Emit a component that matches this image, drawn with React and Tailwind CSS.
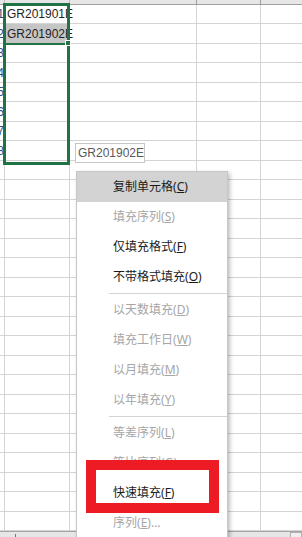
import React from 'react'

const rows = Array.from({ length: 27 }, (_, i) => i + 1)

const cellText = {
  1: 'GR201901E',
  2: 'GR201902E',
}

const menuItems = [
  { label: '复制单元格', key: 'C', enabled: true, active: true },
  { label: '填充序列', key: 'S' },
  { label: '仅填充格式', key: 'F', enabled: true },
  { label: '不带格式填充', key: 'O', enabled: true },
  { sep: true },
  { label: '以天数填充', key: 'D' },
  { label: '填充工作日', key: 'W' },
  { label: '以月填充', key: 'M' },
  { label: '以年填充', key: 'Y' },
  { sep: true },
  { label: '等差序列', key: 'L' },
  { label: '等比序列', key: 'G' },
  { label: '快速填充', key: 'F', enabled: true },
  { label: '序列', key: 'E', tail: '...' },
]

const Row = ({ n }) => (
  <div className="flex h-[20px] border-b border-[#d4d4d4]">
    <div className="w-[5px] shrink-0 border-r border-[#d4d4d4] overflow-hidden flex justify-end items-center text-[12px] text-[#2f4f7f]">
      {n <= 8 && <span className="whitespace-nowrap">{n}</span>}
    </div>
    <div
      className={`w-[65px] shrink-0 border-r border-[#d4d4d4] flex items-center pl-[2px] text-[12px] text-[#1f1f1f] whitespace-nowrap relative z-10 ${
        n === 2 ? 'bg-[#c6c6c6]' : ''
      }`}
    >
      <span>{cellText[n]}</span>
    </div>
    <div className="w-[127px] shrink-0 border-r border-[#d4d4d4]" />
    <div className="w-[64px] shrink-0 border-r border-[#d4d4d4]" />
    <div className="flex-1" />
  </div>
)

const App = () => {
  return (
    <div className="relative w-[302px] h-[537px] overflow-hidden bg-white font-['Liberation_Sans',sans-serif]">
      {/* sheet grid */}
      <div className="h-[531px] overflow-hidden flex flex-col">
        <div className="flex h-[5px] shrink-0 bg-[#e6e6e6] border-b border-[#9f9f9f]">
          <div className="w-[5px] shrink-0 border-r border-[#bcbcbc]" />
          <div className="w-[65px] shrink-0 border-r border-[#bcbcbc]" />
          <div className="w-[127px] shrink-0 border-r border-[#9f9f9f]" />
          <div className="w-[64px] shrink-0 border-r border-[#9f9f9f]" />
          <div className="flex-1" />
        </div>
        {rows.map((n) => (
          <Row key={n} n={n} />
        ))}
      </div>

      {/* sheet tab bar */}
      <div className="relative h-[6px] bg-[#e6e6e6] border-t border-[#a6a6a6]">
        <div className="absolute left-[15px] top-[2px] w-px h-[4px] bg-[#777]" />
        <div className="absolute left-[290px] top-0 w-[12px] h-[6px] border border-[#b0b0b0] bg-[#f0f0f0]" />
      </div>

      {/* selection */}
      <div className="absolute left-[3px] top-[3px] w-[67px] h-[162px] border-[3px] border-[#217346] z-20 pointer-events-none" />
      <div className="absolute left-[6px] top-[43px] w-[61px] h-[2px] bg-[#217346] z-20" />
      <div className="absolute left-[65px] top-[40px] w-[6px] h-[6px] bg-[#217346] border border-white z-20" />

      {/* tooltip */}
      <div className="absolute left-[75px] top-[143px] w-[70px] h-[20px] bg-white border border-[#c6c6c6] flex items-center pl-[2px] text-[12px] text-[#595959] z-20">
        GR201902E
      </div>

      {/* context menu */}
      <div className="absolute left-[76px] top-[171px] w-[152px] bg-white border border-[#c6c6c6] shadow-[2px_2px_4px_rgba(0,0,0,0.25)] z-30 font-['Noto_Sans','Noto_Sans_CJK_SC',sans-serif] text-[12px]">
        {menuItems.map((item, i) =>
          item.sep ? (
            <div key={i} className="h-[3px] py-[1px] pl-[32px]">
              <div className="h-px bg-[#d4d4d4]" />
            </div>
          ) : (
            <div
              key={i}
              className={`h-[30px] flex items-center pl-[36px] whitespace-nowrap ${
                item.active ? 'bg-[#d3d3d3]' : ''
              } ${item.enabled ? 'text-[#1a1a1a]' : 'text-[#a6a6a6]'}`}
            >
              {item.label}(<span className="underline">{item.key}</span>){item.tail}
            </div>
          )
        )}
      </div>

      {/* annotation */}
      <div className="absolute left-[86px] top-[460px] w-[133px] h-[53px] border-[10px] border-[#ed1c24] z-40" />
    </div>
  )
}

export default App
